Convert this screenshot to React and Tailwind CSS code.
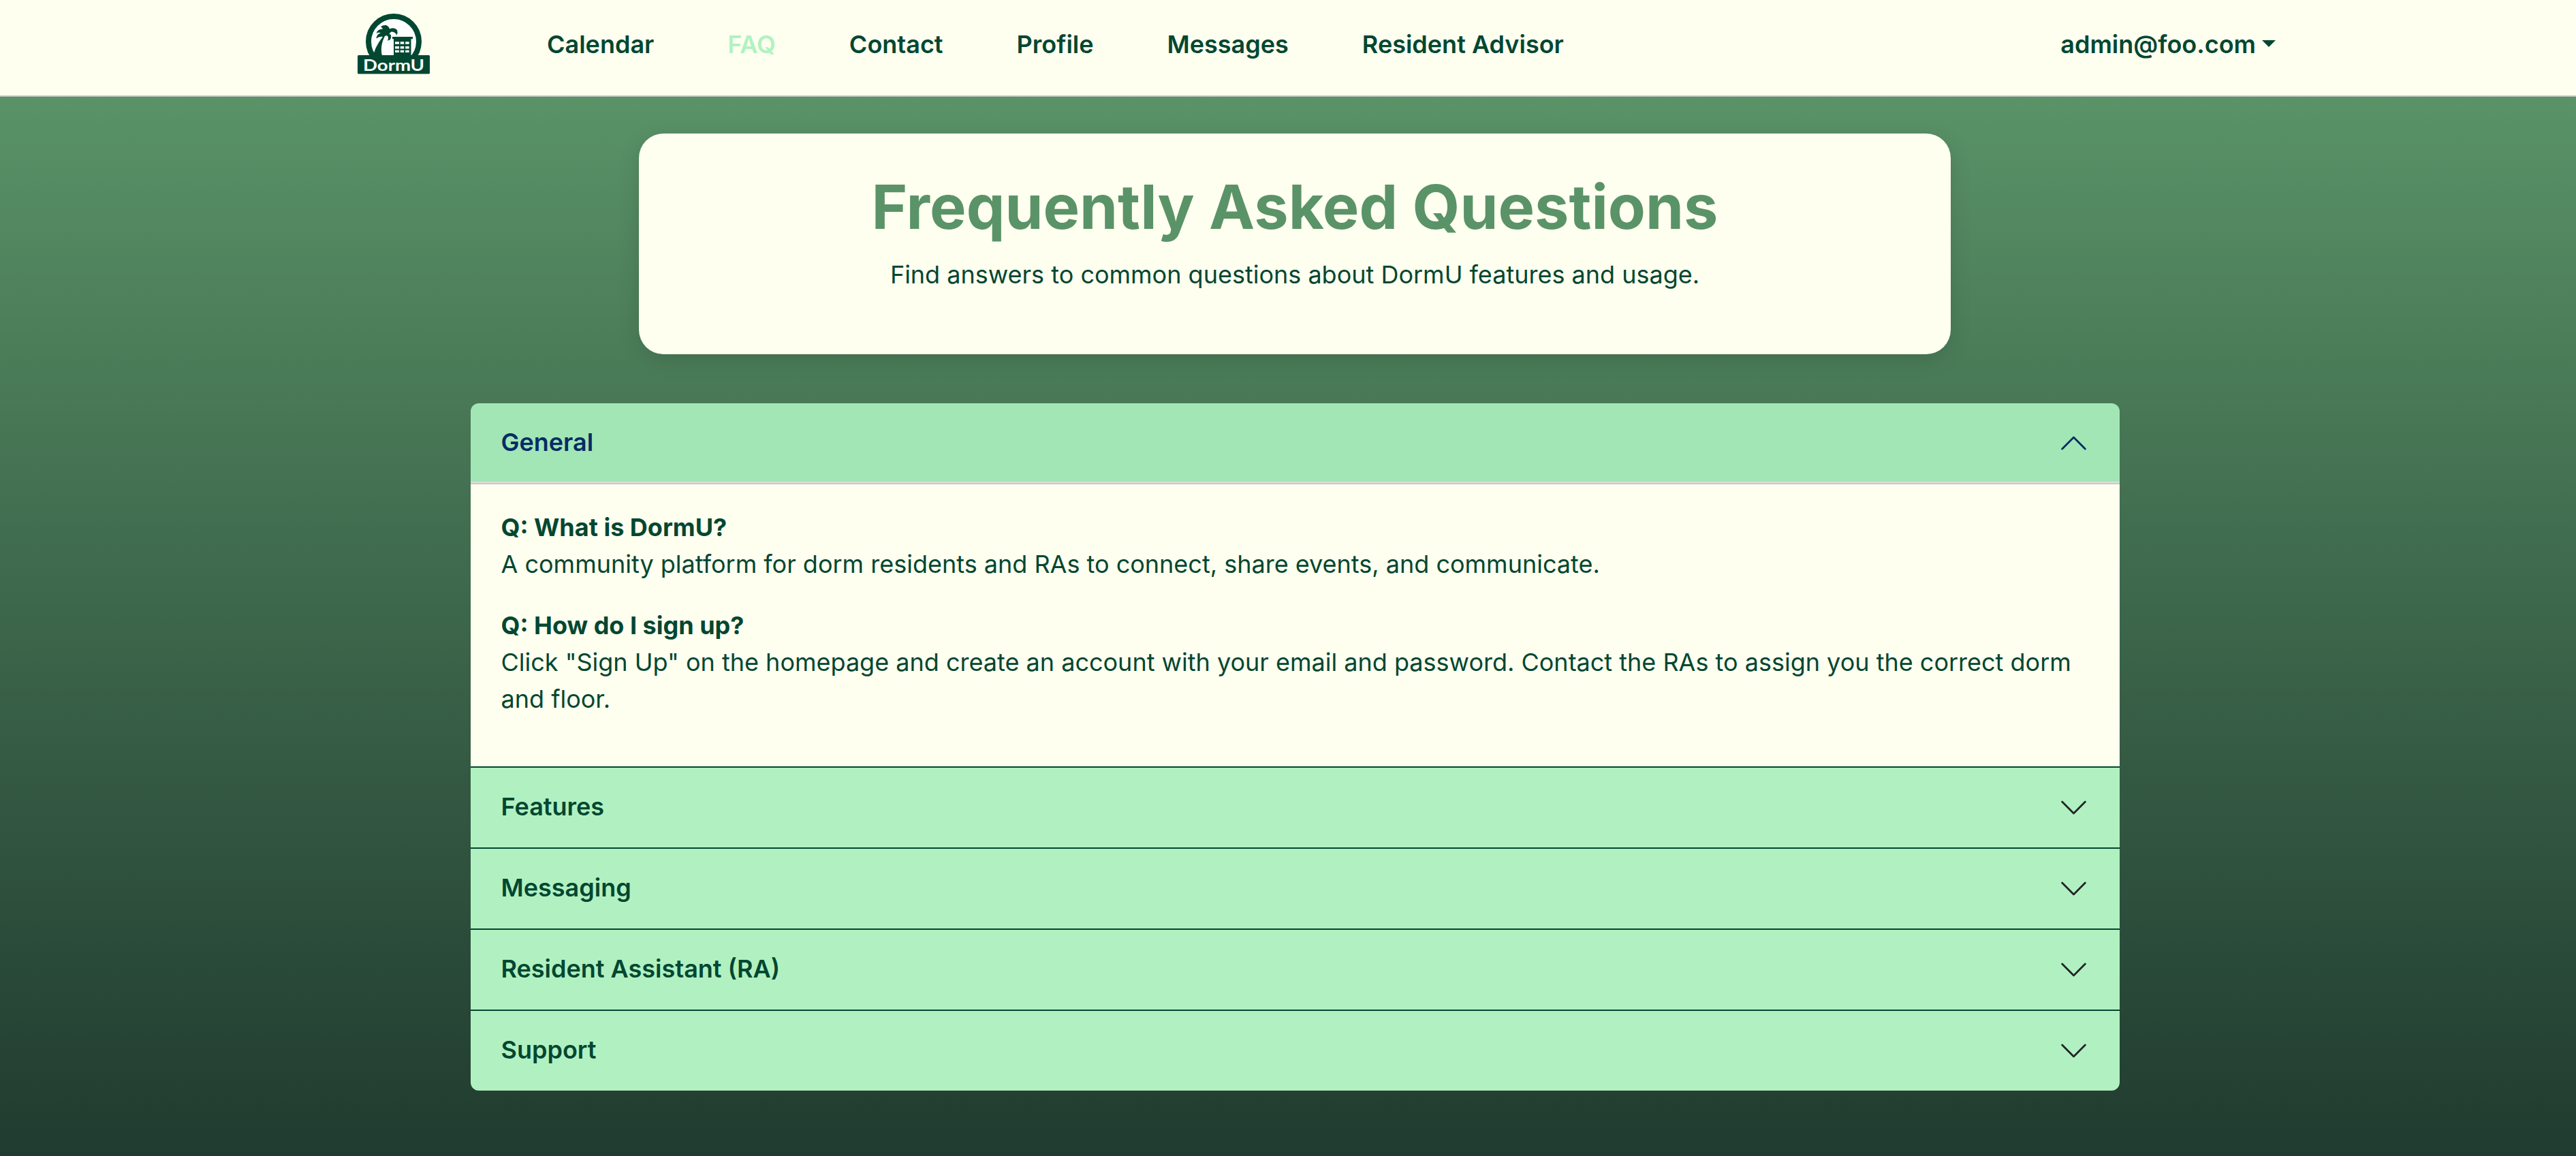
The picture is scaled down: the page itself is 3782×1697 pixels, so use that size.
const NAV = ["Calendar", "FAQ", "Contact", "Profile", "Messages", "Resident Advisor"];
const SECTIONS = ["Features", "Messaging", "Resident Assistant (RA)", "Support"];

function Logo() {
  return (
    <svg className="h-[90px] w-[108px]" viewBox="0 0 108 90">
      <circle cx="53" cy="41" r="37" fill="#fff" stroke="#024731" strokeWidth="8" />
      <path
        fill="#024731"
        d="M23 62C25 52 30 43 37 34Q32 33 27.500 36.500Q28 30 34 28.500Q31 27 27.500 29Q29 22.500 37 22.500Q36 20 34 19.500Q36 16.500 42 17Q46 18.500 47 22.500Q54 19.500 58 24Q59.500 28 57.500 32Q56 27 50 26.500Q47.500 27 46.500 30Q50 30 49 36Q47.500 39.500 44 39.500Q46.500 35 43 32L40 33C35.500 42 33.500 51 36 62Z"
      />
      <path fill="#024731" d="M51 34h30v3.300h-2.500v24h-25.500v-24h-2z" />
      <path
        fill="#fff"
        d="M55 41.300h6v3.400h-6zM62.700 41.300h5.500v3.400h-5.500zM70.200 41.300h5.500v3.400h-5.500zM55 48h6v3.400h-6zM62.700 48h5.500v3.400h-5.500zM70.200 48h5.500v3.400h-5.500zM55 53.700h6v3.400h-6zM62.700 53.700h5.500v3.400h-5.500zM70.200 53.700h5.500v3.400h-5.500z"
      />
      <rect x="0" y="61" width="106" height="27.600" rx="1.500" fill="#024731" />
      <text x="8" y="83.500" fill="#fff" fontFamily="Lato" fontWeight="700" fontSize="23" textLength="90" lengthAdjust="spacingAndGlyphs">
        DormU
      </text>
    </svg>
  );
}

function Chevron({ open }) {
  return (
    <svg
      className={open ? "size-[45px] rotate-180" : "size-[45px]"}
      viewBox="0 0 16 16"
      fill="none"
      stroke={open ? "#052c65" : "#212529"}
      strokeLinecap="round"
      strokeLinejoin="round"
    >
      <path d="m2 5 6 6 6-6" />
    </svg>
  );
}

export default function App() {
  return (
    <div className="flex h-[1697px] flex-col font-['Inter',sans-serif] text-[36px] leading-[54px] text-[#024731]">
      <header className="flex h-[142px] items-start border-b-2 border-[#c8c8c8] bg-[#fffff0] pr-[441px] pl-[525px] pt-5">
        <Logo />
        <nav className="ml-[170px] mt-[18px] flex gap-[108px] font-semibold">
          {NAV.map((n) => (
            <a key={n} className={n === "FAQ" ? "text-[#b1f2c1]" : ""}>{n}</a>
          ))}
        </nav>
        <div className="mt-[18px] ml-auto flex items-center gap-[9px] font-semibold">
          admin@foo.com
          <svg className="-mt-[2px] h-[10px] w-5" viewBox="0 0 20 10">
            <path fill="#024731" d="M0 0h20L10 10z" />
          </svg>
        </div>
      </header>
      <main className="flex flex-1 flex-col items-center bg-linear-to-b from-[#5a9367] to-[#203b2f] pt-[54px] pl-5">
        <section className="flex h-[324px] w-[1926px] flex-col items-center rounded-[36px] bg-[#fffff0] pt-[54px] shadow-[0_8px_32px_rgba(0,0,0,0.12)]">
          <h1 className="text-[90px] leading-[108px] font-bold text-[#5a9367]">Frequently Asked Questions</h1>
          <p className="mt-[18px]">Find answers to common questions about DormU features and usage.</p>
        </section>
        <section className="mt-[72px] w-[2421px] overflow-hidden rounded-[12px]">
          <div className="flex h-[117px] items-center justify-between border-b-2 border-[#dcdedc] bg-[#a2e6b5] px-[45px] pt-[2px] font-semibold text-[#052c65]">
            <span className="pb-[4px]">General</span>
            <Chevron open />
          </div>
          <div className="flex h-[416px] flex-col gap-9 border-t-2 border-[#c8c8cc] bg-[#fffff0] px-[45px] pt-[36px]">
            <p>
              <strong>Q: What is DormU?</strong>
              <br />
              A community platform for dorm residents and RAs to connect, share events, and communicate.
            </p>
            <p>
              <strong>Q: How do I sign up?</strong>
              <br />
              Click "Sign Up" on the homepage and create an account with your email and password. Contact the RAs to assign you the correct dorm and floor.
            </p>
          </div>
          {SECTIONS.map((s) => (
            <div key={s} className="flex h-[119px] items-center justify-between border-t-2 border-[#024731] bg-[#b1f1c1] px-[45px] font-semibold">
              <span className="pb-[4px]">{s}</span>
              <Chevron />
            </div>
          ))}
        </section>
      </main>
    </div>
  );
}
